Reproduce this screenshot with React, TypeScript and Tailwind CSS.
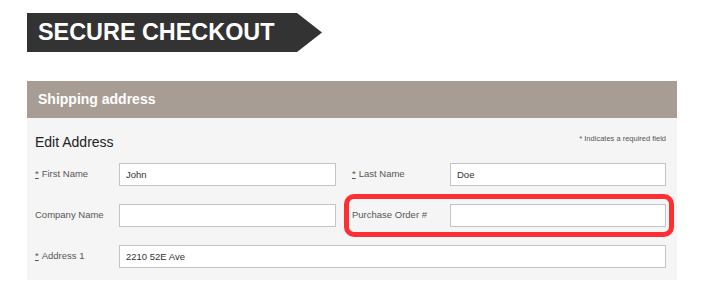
import React from 'react'

function Label({ text, required, width = 'w-[84px]' }: { text: string; required?: boolean; width?: string }) {
  return (
    <label className={`${width} shrink-0 text-[9.5px] text-[#555]`}>
      {required && <span className="mr-[3px] underline">*</span>}
      {text}
    </label>
  )
}

function Field({ value }: { value?: string }) {
  return (
    <input
      defaultValue={value}
      className="h-[23px] w-full border border-[#c4c4c4] bg-white px-[6px] text-[9.5px] text-[#333] outline-none"
      style={{ fontFamily: '"Liberation Sans", Arial, sans-serif' }}
    />
  )
}

export default function App() {
  return (
    <div className="min-h-[303px] w-[717px] bg-white pt-[13px] px-[27px] font-['Liberation_Sans',Arial,sans-serif]">
      <div className="flex h-[39px] w-[295px] items-center bg-[#333] pl-[11px] [clip-path:polygon(0_0,270px_0,100%_50%,270px_100%,0_100%)]">
        <h1 className="text-[23.4px] font-bold leading-none text-white">SECURE CHECKOUT</h1>
      </div>

      <div className="mt-[29px] w-[650px]">
        <div className="flex h-[37px] items-center bg-[#a89d94] pl-[11px]">
          <h2 className="text-[14px] font-bold text-white">Shipping address</h2>
        </div>

        <div className="bg-[#f5f5f5] pl-[8px] pr-[11px] pt-[13px] pb-[12px]">
          <div className="flex h-[22px] items-center justify-between">
            <h3 className="text-[14px] text-[#222]">Edit Address</h3>
            <span className="-mt-[7px] text-[7.5px] text-[#555]">* Indicates a required field</span>
          </div>

          <div className="mt-[10px] flex h-[23px] items-center">
            <div className="flex w-[301px] items-center">
              <Label text="First Name" required />
              <Field value="John" />
            </div>
            <div className="ml-[16px] flex flex-1 items-center">
              <Label text="Last Name" required width="w-[98px]" />
              <Field value="Doe" />
            </div>
          </div>

          <div className="mt-[18px] flex h-[23px] items-center">
            <div className="flex w-[301px] items-center">
              <Label text="Company Name" />
              <Field />
            </div>
            <div className="relative ml-[16px] flex flex-1 items-center">
              <Label text="Purchase Order #" width="w-[98px]" />
              <Field />
              <div className="pointer-events-none absolute -left-[8px] -right-[8px] -top-[10px] -bottom-[10px] rounded-[10px] border-[5px] border-[#fe2f33]" />
            </div>
          </div>

          <div className="mt-[18px] flex h-[23px] items-center">
            <Label text="Address 1" required />
            <Field value="2210 52E Ave" />
          </div>
        </div>
      </div>
    </div>
  )
}
